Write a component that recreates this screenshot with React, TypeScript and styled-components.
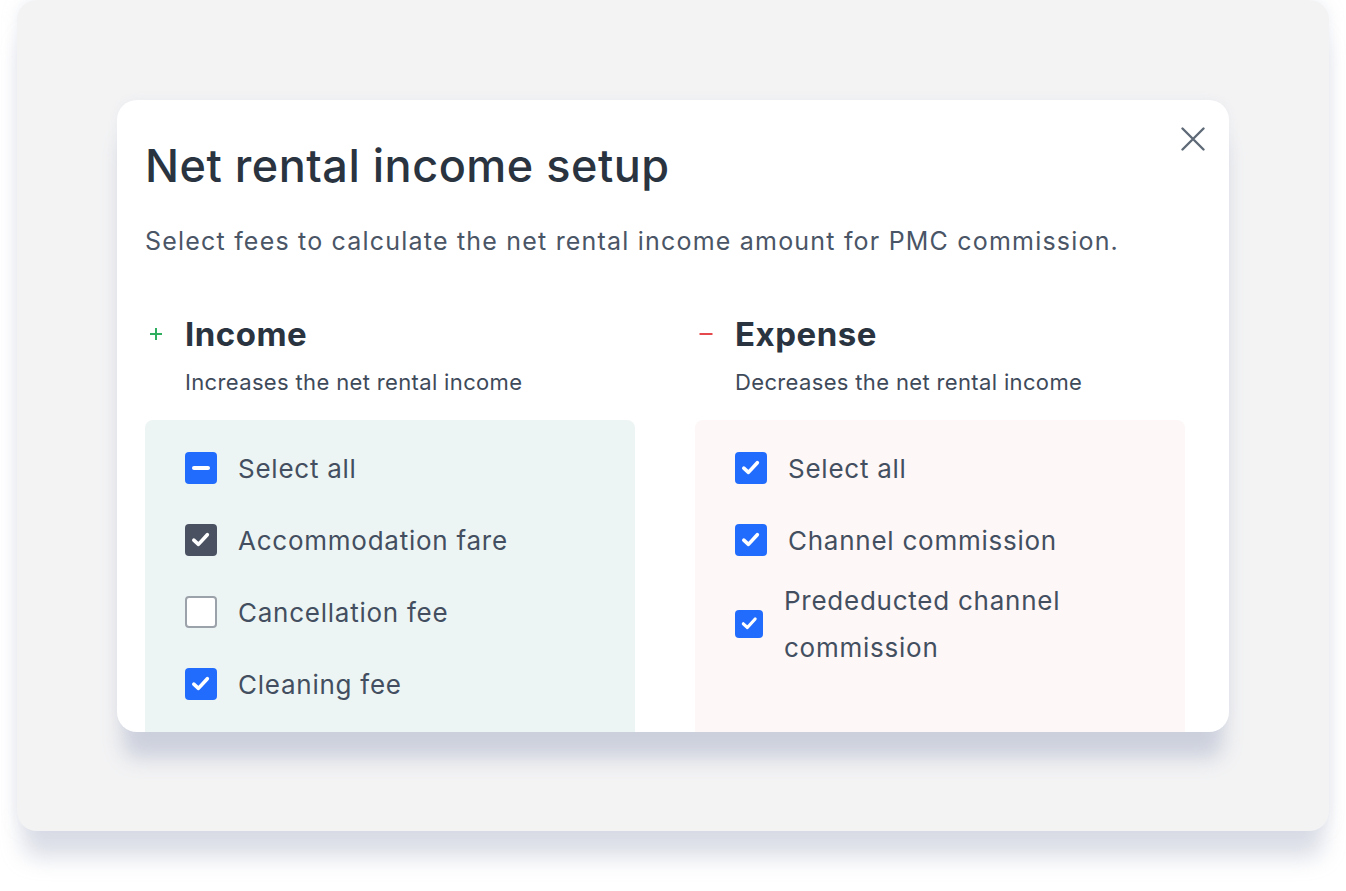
import React from "react";
import styled, { createGlobalStyle } from "styled-components";

const GlobalStyle = createGlobalStyle`
  html, body { margin: 0; padding: 0; background: #ffffff; }
  body { font-family: Inter, "Noto Sans", sans-serif; -webkit-font-smoothing: antialiased; }
  * { box-sizing: border-box; }
`;

const Page = styled.div`
  width: 1346px;
  height: 891px;
  padding: 0 17px;
  background: #ffffff;
`;

const Backdrop = styled.div`
  width: 1312px;
  height: 831px;
  background: #f3f3f4;
  border-radius: 20px;
  box-shadow: 0 32px 22px -6px rgba(205, 209, 221, 0.75), 0 0 14px rgba(220, 224, 234, 0.5);
  padding: 100px 100px 0 100px;
`;

const Modal = styled.div`
  position: relative;
  width: 1112px;
  height: 632px;
  background: #ffffff;
  border-radius: 20px;
  overflow: hidden;
  padding: 39px 44px 0 28px;
  box-shadow: 0 32px 20px -6px rgba(198, 202, 216, 0.85), 0 0 10px rgba(220, 224, 234, 0.4);
`;

const CloseButton = styled.button`
  position: absolute;
  top: 27px;
  right: 24px;
  width: 24px;
  height: 24px;
  padding: 0;
  border: 0;
  background: transparent;
  color: #5f6a78;
  display: flex;
  align-items: center;
  justify-content: center;
`;

const Title = styled.h1`
  margin: 0;
  font-size: 45px;
  line-height: 54px;
  font-weight: 500;
  color: #2a3440;
  letter-spacing: 0.5px;
`;

const Subtitle = styled.p`
  margin: 32px 0 0;
  font-size: 25px;
  line-height: 32px;
  font-weight: 400;
  color: #4a5566;
  letter-spacing: 1.2px;
`;

const Columns = styled.div`
  margin-top: 57px;
  display: grid;
  grid-template-columns: 490px 490px;
  column-gap: 60px;
`;

const Column = styled.section`
  display: flex;
  flex-direction: column;
`;

const HeadRow = styled.div`
  display: flex;
  align-items: center;
`;

const Sign = styled.span<{ $kind: "plus" | "minus" }>`
  width: 40px;
  display: flex;
  align-items: center;
  padding-left: 4px;
  color: ${(p) => (p.$kind === "plus" ? "#2fae5f" : "#e5484d")};
`;

const GroupTitle = styled.h2`
  margin: 0;
  font-size: 33px;
  line-height: 40px;
  font-weight: 700;
  color: #2a3440;
  letter-spacing: 0.5px;
`;

const GroupHint = styled.p`
  margin: 13px 0 0 40px;
  font-size: 22px;
  line-height: 30px;
  color: #3e4a5a;
  letter-spacing: 0.35px;
`;

const Panel = styled.div<{ $tone: "income" | "expense" }>`
  margin-top: 23px;
  height: 340px;
  border-radius: 8px 8px 0 0;
  background: ${(p) => (p.$tone === "income" ? "#edf5f4" : "#fdf7f7")};
  padding: 32px 40px 0 40px;
  display: flex;
  flex-direction: column;
  gap: 40px;
`;

const Row = styled.label<{ $wrapped?: boolean }>`
  display: flex;
  align-items: center;
  gap: 21px;
  min-height: 32px;
  margin-top: ${(p) => (p.$wrapped ? "-12px" : "0")};
`;

const Box = styled.span<{ $state: "checked" | "mixed" | "muted" | "empty"; $size?: number }>`
  flex: none;
  width: ${(p) => p.$size ?? 32}px;
  height: ${(p) => p.$size ?? 32}px;
  border-radius: 4px;
  display: flex;
  align-items: center;
  justify-content: center;
  background: ${(p) =>
    p.$state === "empty" ? "#ffffff" : p.$state === "muted" ? "#4a5262" : "#226cfd"};
  border: ${(p) => (p.$state === "empty" ? "2px solid #9ca2aa" : "none")};
`;

const LabelText = styled.span`
  font-size: 26px;
  line-height: 47px;
  margin: -7.5px 0;
  color: #434f60;
  letter-spacing: 0.75px;
`;

type BoxState = "checked" | "mixed" | "muted" | "empty";

const CheckMark = ({ size }: { size: number }) => (
  <svg width={size * 0.66} height={size * 0.66} viewBox="0 0 20 20" fill="none">
    <path d="M3.6 10.6 L8 14.6 L16.4 5.4" stroke="#fff" strokeWidth="3.4" strokeLinecap="round" strokeLinejoin="round" />
  </svg>
);

const Dash = () => (
  <svg width="18" height="4" viewBox="0 0 18 4">
    <rect x="0" y="0" width="18" height="4" rx="2" fill="#fff" />
  </svg>
);

const Item = ({ state, text, size = 32, wrapped }: { state: BoxState; text: string; size?: number; wrapped?: boolean }) => (
  <Row $wrapped={wrapped}>
    <Box $state={state} $size={size}>
      {state === "mixed" ? <Dash /> : state === "empty" ? null : <CheckMark size={size} />}
    </Box>
    <LabelText>{text}</LabelText>
  </Row>
);

export default function App() {
  return (
    <>
      <GlobalStyle />
      <Page>
        <Backdrop>
          <Modal>
            <CloseButton aria-label="Close">
              <svg width="24" height="24" viewBox="0 0 24 24" fill="none">
                <path d="M1.5 1.5 L22.5 22.5 M22.5 1.5 L1.5 22.5" stroke="currentColor" strokeWidth="2.4" strokeLinecap="round" />
              </svg>
            </CloseButton>
            <Title>Net rental income setup</Title>
            <Subtitle>Select fees to calculate the net rental income amount for PMC commission.</Subtitle>
            <Columns>
              <Column>
                <HeadRow>
                  <Sign $kind="plus">
                    <svg width="14" height="14" viewBox="0 0 14 14">
                      <path d="M7 1 V13 M1 7 H13" stroke="currentColor" strokeWidth="2" />
                    </svg>
                  </Sign>
                  <GroupTitle>Income</GroupTitle>
                </HeadRow>
                <GroupHint>Increases the net rental income</GroupHint>
                <Panel $tone="income">
                  <Item state="mixed" text="Select all" />
                  <Item state="muted" text="Accommodation fare" />
                  <Item state="empty" text="Cancellation fee" />
                  <Item state="checked" text="Cleaning fee" />
                </Panel>
              </Column>
              <Column>
                <HeadRow>
                  <Sign $kind="minus">
                    <svg width="14" height="14" viewBox="0 0 14 14">
                      <path d="M0.5 7 H13.5" stroke="currentColor" strokeWidth="2" />
                    </svg>
                  </Sign>
                  <GroupTitle>Expense</GroupTitle>
                </HeadRow>
                <GroupHint>Decreases the net rental income</GroupHint>
                <Panel $tone="expense">
                  <Item state="checked" text="Select all" />
                  <Item state="checked" text="Channel commission" />
                  <Item state="checked" text="Prededucted channel commission" size={28} wrapped />
                </Panel>
              </Column>
            </Columns>
          </Modal>
        </Backdrop>
      </Page>
    </>
  );
}
